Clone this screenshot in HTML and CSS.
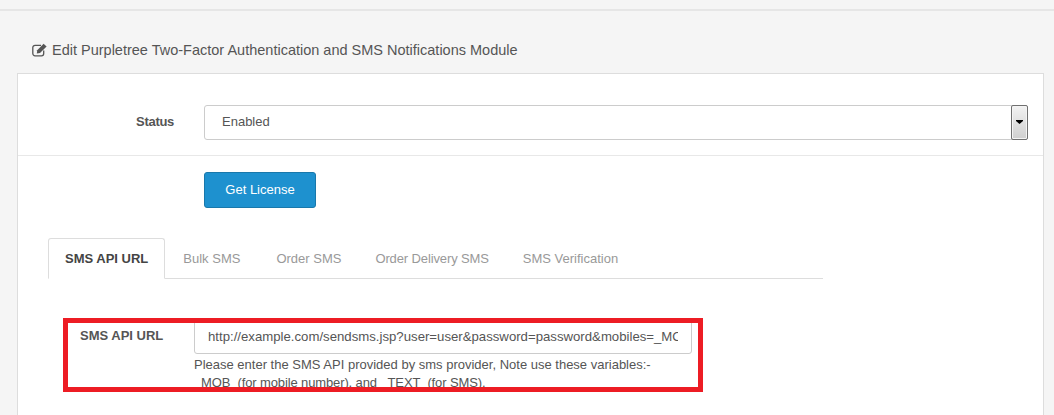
FILE: index.html
```html
<!DOCTYPE html>
<html lang="en">
<head>
<meta charset="utf-8">
<title>Edit Module</title>
<link rel="stylesheet" href="styles.css">
</head>
<body>
<div class="topbar"></div>
<main class="page">
  <h1 class="title">
    <svg class="title-icon" viewBox="0 0 16 14" width="16" height="14" aria-hidden="true">
      <path d="M11.7 7.5V10.6A2.2 2.2 0 0 1 9.5 12.8H3A2.2 2.2 0 0 1 .8 10.6V4.6A2.2 2.2 0 0 1 3 2.4H9" fill="none" stroke="#555" stroke-width="1.3"/>
      <path d="M5.2 7.2L11.6 .8 14.6 3.6 8 10 4.8 10.4Z" fill="#555"/>
    </svg>
    Edit Purpletree Two-Factor Authentication and SMS Notifications Module
  </h1>
  <section class="panel">
    <div class="status-row">
      <label class="status-label">Status</label>
      <div class="select">
        <span class="select-value">Enabled</span>
        <span class="select-btn"><i class="select-arrow"></i></span>
      </div>
    </div>
    <div class="license-row"><button class="btn" type="button">Get License</button></div>
    <ul class="tabs">
      <li class="tab active">SMS API URL</li>
      <li class="tab tab-bulk">Bulk SMS</li>
      <li class="tab">Order SMS</li>
      <li class="tab tab-delivery">Order Delivery SMS</li>
      <li class="tab">SMS Verification</li>
    </ul>
    <div class="field">
      <label class="field-label" for="api-url">SMS API URL</label>
      <div class="field-body">
        <input class="input" id="api-url" type="text" value="http://example.com/sendsms.jsp?user=user&amp;password=password&amp;mobiles=_MOB_&amp;message=_TEXT_">
        <p class="help">Please enter the SMS API provided by sms provider, Note use these variables:- <span class="help-vars">_MOB_(for mobile number), and _TEXT_(for SMS).</span></p>
      </div>
      <div class="highlight"></div>
    </div>
  </section>
</main>
</body>
</html>
```
FILE: styles.css
```css
* { box-sizing: border-box; }
html, body { height: 100%; overflow: hidden; }
body {
  display: flex;
  flex-direction: column;
  margin: 0;
  background: #f5f5f5;
  font-family: "Liberation Sans", Arial, sans-serif;
  font-size: 13px;
  color: #555;
}
.topbar { flex: none; height: 11px; border-bottom: 2px solid #e6e6e6; }
.page {
  flex: 1;
  display: flex;
  flex-direction: column;
  min-height: 0;
  padding: 0 10px 0 17px;
}
.title {
  flex: none;
  display: flex;
  align-items: center;
  gap: 4px;
  margin: 0;
  padding: 16px 0 0 15px;
  height: 62px;
  font-size: 14.5px;
  font-weight: 400;
  color: #555;
}
.title-icon { flex: none; }
.panel {
  flex: 1;
  min-height: 0;
  background: #fff;
  border: 1px solid #ddd;
  border-bottom: 0;
}
.status-row {
  display: flex;
  align-items: center;
  height: 82px;
  padding: 30px 15px 15px 0;
  border-bottom: 1px solid #e8e8e8;
}
.status-label {
  width: 156px;
  text-align: right;
  font-weight: 700;
  letter-spacing: -0.3px;
  margin-right: 30px;
  padding-bottom: 2px;
}
.select {
  flex: 1;
  height: 35px;
  display: flex;
  align-items: center;
  justify-content: space-between;
  padding: 0 0 2px 17px;
  background: #fff;
  border: 1px solid #ccc;
  border-radius: 3px;
  position: relative;
}
.select-btn {
  position: absolute;
  right: -1px;
  top: -1px;
  bottom: -1px;
  width: 17px;
  display: flex;
  align-items: center;
  justify-content: center;
  border: 1px solid #707070;
  border-radius: 2px;
  box-shadow: inset 0 0 0 1px #f4f4f4;
  background: linear-gradient(#f2f2f2, #cfcfcf);
}
.select-arrow {
  width: 7px;
  height: 4px;
  background: #000;
  clip-path: polygon(0 0, 100% 0, 100% 25%, 50% 100%, 0 25%);
}
.license-row { padding: 16px 0 0 186px; }
.btn {
  display: block;
  width: 112px;
  height: 36px;
  padding: 0 0 2px;
  font: 13px "Liberation Sans", Arial, sans-serif;
  color: #fff;
  background: #1e91cf;
  border: 1px solid #1978ab;
  border-radius: 3px;
}
.tabs {
  display: flex;
  list-style: none;
  margin: 30px 0 0 30px;
  padding: 0;
  width: 775px;
  height: 41px;
  border-bottom: 1px solid #ddd;
}
.tab {
  padding: 13px 17px 0;
  height: 40px;
  line-height: 16px;
  color: #999;
  white-space: nowrap;
}
.tab-bulk { padding-right: 19px; }
.tab-delivery { letter-spacing: -0.12px; }
.tab.active {
  height: 41px;
  padding: 12px 16px 0;
  margin-right: 1px;
  font-weight: 700;
  color: #444;
  background: #fff;
  border: 1px solid #ddd;
  border-bottom-color: #fff;
  border-radius: 3px 3px 0 0;
}
.field {
  position: relative;
  display: flex;
  margin: 39px 0 0 45px;
  width: 640px;
  height: 74px;
}
.field-label {
  width: 131px;
  padding: 10px 0 0 17px;
  font-weight: 700;
  flex: none;
}
.field-body { width: 498px; }
.input {
  display: block;
  width: 100%;
  height: 36px;
  padding: 1px 13px 0;
  font: 13.2px "Liberation Sans", Arial, sans-serif;
  color: #555;
  background: #fff;
  border: 1px solid #ccc;
  border-radius: 3px;
  outline: 0;
}
.help {
  margin: 0;
  padding-top: 2px;
  width: 480px;
  line-height: 18px;
}
.help-vars { display: block; letter-spacing: -0.12px; }
.highlight {
  position: absolute;
  inset: 0;
  border: 5px solid #ed1c24;
  pointer-events: none;
}
```
